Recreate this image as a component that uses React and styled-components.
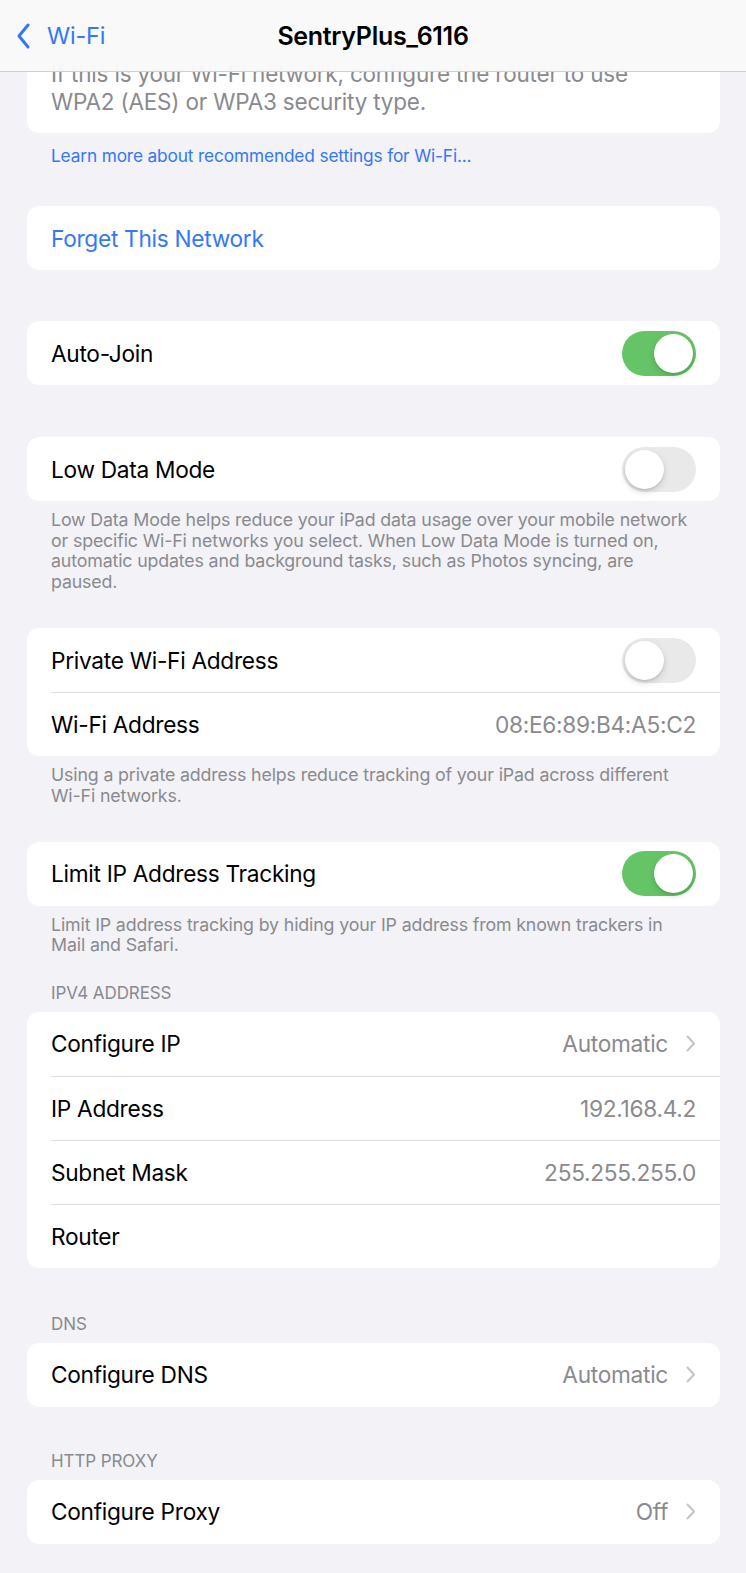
import React from 'react';
import styled, { createGlobalStyle } from 'styled-components';

const GlobalStyle = createGlobalStyle`
  html, body {
    margin: 0;
    padding: 0;
    background: #f2f2f7;
  }
  body {
    font-family: Inter, "Noto Sans", "Liberation Sans", sans-serif;
    -webkit-font-smoothing: antialiased;
  }
`;

const Screen = styled.div`
  width: 746px;
  height: 1573px;
  overflow: hidden;
  position: relative;
  background: #f2f2f7;
`;

const NavBar = styled.div`
  position: absolute;
  top: 0;
  left: 0;
  right: 0;
  height: 71px;
  background: rgba(249, 249, 249, 0.97);
  border-bottom: 1px solid #cfcfd2;
  display: flex;
  align-items: center;
  justify-content: center;
  z-index: 2;
`;

const Back = styled.div`
  position: absolute;
  left: 17px;
  top: 0;
  bottom: 0;
  display: flex;
  align-items: center;
  gap: 17px;
  color: #3478f6;
  font-size: 23.5px;
  letter-spacing: -0.2px;
`;

const Title = styled.div`
  font-size: 25px;
  font-weight: 600;
  color: #000;
  letter-spacing: -0.3px;
`;

const Content = styled.div`
  padding: 38px 26px 0 27px;
  display: flex;
  flex-direction: column;
`;

const Card = styled.div`
  background: #fff;
  border-radius: 12px;
  overflow: hidden;
  margin-top: ${p => p.$mt || 0}px;
`;

const InfoText = styled.div`
  padding: 22px 24px 17px;
  font-size: 22.5px;
  line-height: 28px;
  color: #8a8a8e;
  letter-spacing: -0.2px;
  white-space: nowrap;
`;

const Row = styled.div`
  height: 64px;
  margin-left: 24px;
  padding-right: 24px;
  display: flex;
  align-items: center;
  justify-content: space-between;
  border-top: ${p => (p.$first ? 'none' : '1px solid #dcdce0')};
  box-sizing: border-box;
`;

const Label = styled.span`
  font-size: 22.7px;
  color: ${p => (p.$action ? '#3478f6' : '#000')};
  letter-spacing: -0.3px;
`;

const Value = styled.span`
  display: flex;
  align-items: center;
  gap: 18px;
  font-size: 22.7px;
  color: #8a8a8e;
  letter-spacing: -0.3px;
`;

const Footer = styled.div`
  padding: 9px 24px 0;
  font-size: 17.8px;
  line-height: 20.6px;
  color: #8a8a8e;
  letter-spacing: -0.15px;
`;

const Link = styled.div`
  padding: 13px 24px 0;
  font-size: 17.3px;
  line-height: 20px;
  color: #3478f6;
  letter-spacing: -0.15px;
`;

const Header = styled.div`
  padding: 0 24px 9px;
  margin-top: ${p => p.$mt || 0}px;
  font-size: 17px;
  line-height: 20px;
  color: #8a8a8e;
  text-transform: uppercase;
  letter-spacing: -0.1px;
`;

const Track = styled.div`
  width: 74px;
  height: 45px;
  border-radius: 23px;
  background: ${p => (p.$on ? '#65c466' : '#e9e9ea')};
  position: relative;
  flex-shrink: 0;
`;

const Knob = styled.div`
  position: absolute;
  top: 3px;
  left: ${p => (p.$on ? '32px' : '3px')};
  width: 39px;
  height: 39px;
  border-radius: 50%;
  background: #fff;
  box-shadow: 0 3px 6px rgba(0, 0, 0, 0.15), 0 1px 2px rgba(0, 0, 0, 0.1);
`;

const Toggle = ({ on }) => (
  <Track $on={on}>
    <Knob $on={on} />
  </Track>
);

const Chevron = () => (
  <svg width="10" height="17" viewBox="0 0 10 17" fill="none">
    <path d="M1.5 1.5 L8 8.5 L1.5 15.5" stroke="#c4c4c7" strokeWidth="2" strokeLinecap="round" strokeLinejoin="round" />
  </svg>
);

const BackChevron = () => (
  <svg width="13" height="26" viewBox="0 0 13 26" fill="none">
    <path d="M11 2 L2 13 L11 24" stroke="#3478f6" strokeWidth="3" strokeLinecap="round" strokeLinejoin="round" />
  </svg>
);

export default function App() {
  return (
    <Screen>
      <GlobalStyle />
      <NavBar>
        <Back>
          <BackChevron />
          <span>Wi-Fi</span>
        </Back>
        <Title>SentryPlus_6116</Title>
      </NavBar>
      <Content>
        <Card>
          <InfoText>
            If this is your Wi-Fi network, configure the router to use
            <br />
            WPA2 (AES) or WPA3 security type.
          </InfoText>
        </Card>
        <Link>Learn more about recommended settings for Wi-Fi...</Link>

        <Card $mt={40}>
          <Row $first>
            <Label $action>Forget This Network</Label>
          </Row>
        </Card>

        <Card $mt={51}>
          <Row $first>
            <Label>Auto-Join</Label>
            <Toggle on />
          </Row>
        </Card>

        <Card $mt={52}>
          <Row $first>
            <Label>Low Data Mode</Label>
            <Toggle />
          </Row>
        </Card>
        <Footer>
          Low Data Mode helps reduce your iPad data usage over your mobile network
          or specific Wi-Fi networks you select. When Low Data Mode is turned on,
          automatic updates and background tasks, such as Photos syncing, are
          paused.
        </Footer>

        <Card $mt={36}>
          <Row $first>
            <Label>Private Wi-Fi Address</Label>
            <Toggle />
          </Row>
          <Row>
            <Label>Wi-Fi Address</Label>
            <Value>08:E6:89:B4:A5:C2</Value>
          </Row>
        </Card>
        <Footer>
          Using a private address helps reduce tracking of your iPad across different
          Wi-Fi networks.
        </Footer>

        <Card $mt={35}>
          <Row $first>
            <Label>Limit IP Address Tracking</Label>
            <Toggle on />
          </Row>
        </Card>
        <Footer>
          Limit IP address tracking by hiding your IP address from known trackers in
          Mail and Safari.
        </Footer>

        <Header $mt={27}>IPv4 Address</Header>
        <Card>
          <Row $first>
            <Label>Configure IP</Label>
            <Value>Automatic <Chevron /></Value>
          </Row>
          <Row>
            <Label>IP Address</Label>
            <Value>192.168.4.2</Value>
          </Row>
          <Row>
            <Label>Subnet Mask</Label>
            <Value>255.255.255.0</Value>
          </Row>
          <Row>
            <Label>Router</Label>
          </Row>
        </Card>

        <Header $mt={46}>DNS</Header>
        <Card>
          <Row $first>
            <Label>Configure DNS</Label>
            <Value>Automatic <Chevron /></Value>
          </Row>
        </Card>

        <Header $mt={44}>HTTP Proxy</Header>
        <Card>
          <Row $first>
            <Label>Configure Proxy</Label>
            <Value>Off <Chevron /></Value>
          </Row>
        </Card>
      </Content>
    </Screen>
  );
}
